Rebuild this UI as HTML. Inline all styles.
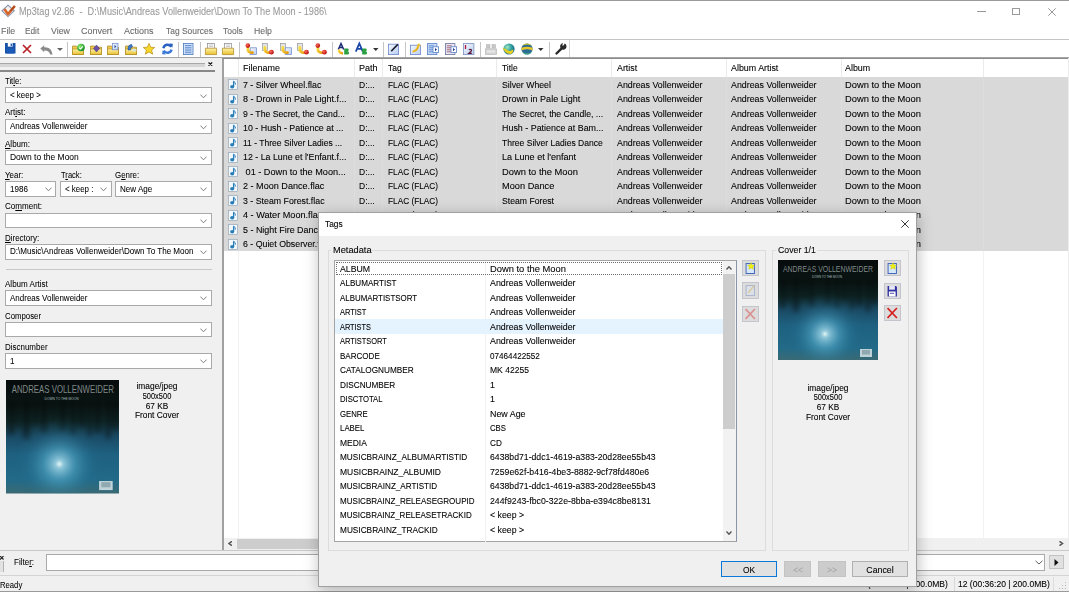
<!DOCTYPE html>
<html><head><meta charset="utf-8">
<style>
*{box-sizing:border-box;margin:0;padding:0}
html,body{width:1069px;height:592px;overflow:hidden;background:#f0f0f0}
body{position:relative;font-family:"Liberation Sans",sans-serif;font-size:9px;color:#000}
.a{position:absolute}
.t{position:absolute;white-space:pre;line-height:10px;-webkit-text-stroke:0.1px currentColor}
.cb{position:absolute;background:#fff;border:1px solid #a9a9a9}
.cb .v{position:absolute;left:3px;top:2px;white-space:pre;line-height:10px}
.chev{position:absolute;right:3.5px;top:5.2px;width:7px;height:4.5px}
.ic{position:absolute;width:12px;height:12px}
</style></head><body>

<div class="a" style="left:0px;top:0px;width:1069px;height:1px;background:#9a9a9a;"></div>
<div class="a" style="left:0px;top:1px;width:1069px;height:38px;background:#fff;"></div>
<div class="a" style="left:0px;top:38.5px;width:1069px;height:1px;background:#c4c4c4;"></div>
<div class="a" style="left:0px;top:39.5px;width:1069px;height:18px;background:#fff;"></div>
<div class="a" style="left:0px;top:57px;width:1069px;height:1px;background:#a5a5a5;"></div>
<svg class="a" style="left:1px;top:4px;width:15px;height:14px" viewBox="0 0 15 14">
<path d="M7 1.2 L13.2 6.8 L7 12.6 L1 6.8z" fill="#f4f0ea" stroke="#6a7e9e" stroke-width="1.1" opacity="0.85"/>
<path d="M3.4 5 L7 10.2 L13.8 2" fill="none" stroke="#d8662a" stroke-width="2.6" stroke-linejoin="round"/>
<path d="M9.5 7 L13.8 2" fill="none" stroke="#a8481e" stroke-width="1.6"/>
</svg>
<div class="t" style="left:18.70px;top:6.49px;font-size:10.4px;line-height:11.62px;color:#9b9b9b;transform:scaleX(0.880);transform-origin:0 0;">Mp3tag v2.86  -  D:\Music\Andreas Vollenweider\Down To The Moon - 1986\</div>
<div class="a" style="left:976.8px;top:11.2px;width:9.2px;height:1px;background:#9a9a9a;"></div>
<div class="a" style="left:1012px;top:7.7px;width:8px;height:7.8px;background:transparent;border:1px solid #9a9a9a"></div>
<svg class="a" style="left:1047.5px;top:7.5px;width:8px;height:8px" viewBox="0 0 8 8"><path d="M0.3 0.3 L7.7 7.7 M7.7 0.3 L0.3 7.7" stroke="#8c8c8c" stroke-width="0.9"/></svg>
<div class="t" style="left:0.90px;top:25.37px;font-size:9.87px;line-height:11.02px;color:#6a6a6a;transform:scaleX(0.893);transform-origin:0 0;">File</div>
<div class="t" style="left:25.40px;top:25.37px;font-size:9.87px;line-height:11.02px;color:#6a6a6a;transform:scaleX(0.838);transform-origin:0 0;">Edit</div>
<div class="t" style="left:51.00px;top:25.37px;font-size:9.87px;line-height:11.02px;color:#6a6a6a;transform:scaleX(0.889);transform-origin:0 0;">View</div>
<div class="t" style="left:80.80px;top:25.37px;font-size:9.87px;line-height:11.02px;color:#6a6a6a;transform:scaleX(0.907);transform-origin:0 0;">Convert</div>
<div class="t" style="left:123.80px;top:25.37px;font-size:9.87px;line-height:11.02px;color:#6a6a6a;transform:scaleX(0.913);transform-origin:0 0;">Actions</div>
<div class="t" style="left:165.50px;top:25.37px;font-size:9.87px;line-height:11.02px;color:#6a6a6a;transform:scaleX(0.856);transform-origin:0 0;">Tag Sources</div>
<div class="t" style="left:223.30px;top:25.37px;font-size:9.87px;line-height:11.02px;color:#6a6a6a;transform:scaleX(0.862);transform-origin:0 0;">Tools</div>
<div class="t" style="left:254.40px;top:25.37px;font-size:9.87px;line-height:11.02px;color:#6a6a6a;transform:scaleX(0.883);transform-origin:0 0;">Help</div>
<svg width="0" height="0" style="position:absolute"><defs><linearGradient id="fold" x1="0" y1="0" x2="0" y2="1"><stop offset="0" stop-color="#fff3a8"/><stop offset="1" stop-color="#e8c030"/></linearGradient><linearGradient id="hook" x1="0" y1="0" x2="1" y2="1"><stop offset="0" stop-color="#f8e040"/><stop offset="1" stop-color="#e89a10"/></linearGradient><radialGradient id="ball" cx="0.35" cy="0.35" r="0.7"><stop offset="0" stop-color="#ff6a5a"/><stop offset="1" stop-color="#b00808"/></radialGradient><radialGradient id="gball" cx="0.35" cy="0.35" r="0.7"><stop offset="0" stop-color="#90f070"/><stop offset="1" stop-color="#108a20"/></radialGradient><linearGradient id="docb" x1="0" y1="0" x2="1" y2="1"><stop offset="0" stop-color="#f4f8ff"/><stop offset="1" stop-color="#b8cef0"/></linearGradient><radialGradient id="globe1" cx="0.35" cy="0.35" r="0.75"><stop offset="0" stop-color="#a0e8c0"/><stop offset="0.5" stop-color="#30a0a0"/><stop offset="1" stop-color="#1a5a80"/></radialGradient></defs></svg>
<svg class="a" style="left:4.8px;top:43.2px;width:10.5px;height:10.5px;overflow:visible" viewBox="0 0 10.5 10.5"><path d="M0 0 h10.5 v10.5 h-10.5z" fill="#1552a8"/><rect x="2.8" y="0" width="4.8" height="3.6" fill="#fff"/><rect x="5.6" y="0.6" width="1.3" height="2.4" fill="#1552a8"/><rect x="1.5" y="5.5" width="7.5" height="5" fill="#1a5cb8"/></svg>
<svg class="a" style="left:22px;top:44.2px;width:10px;height:10px;overflow:visible" viewBox="0 0 10 10"><path d="M1 1 L9 9 M9 1 L1 9" stroke="#b82024" stroke-width="1.7"/></svg>
<svg class="a" style="left:39.5px;top:44.5px;width:13px;height:10px;overflow:visible" viewBox="0 0 13 10"><path d="M0.3 3.6 L4.2 0.3 L4.2 2.2 Q11.5 1.8 12.6 9.6 L10.2 9.6 Q9 5.2 4.2 5.5 L4.2 7.2z" fill="#8a8a8a"/></svg>
<svg class="a" style="left:57px;top:47.5px;width:6px;height:3px;overflow:visible" viewBox="0 0 6 3"><path d="M0 0 h6 l-3 3z" fill="#666"/></svg>
<div class="a" style="left:67px;top:42px;width:1px;height:14.5px;background:#c4c4c4;"></div>
<svg class="a" style="left:72px;top:42.5px;width:13px;height:12px;overflow:visible" viewBox="0 0 13 12"><path d="M0.5 3 h4 l1 1.2 h6 v7.3 h-11z" fill="#f0c850" stroke="#a88420" stroke-width="0.7"/><path d="M0.5 6 h11 v5.5 h-11z" fill="url(#fold)" stroke="#a88420" stroke-width="0.6"/><circle cx="9" cy="4.5" r="3.8" fill="url(#gball)"/><path d="M7.1 4.6 l1.4 1.4 l2.3-2.6" stroke="#fff" fill="none" stroke-width="1.1"/></svg>
<svg class="a" style="left:90px;top:42.5px;width:12px;height:12px;overflow:visible" viewBox="0 0 12 12"><path d="M0.5 3 h4 l1 1.2 h6 v7.3 h-11z" fill="#f0c850" stroke="#a88420" stroke-width="0.7"/><path d="M0.5 6 h11 v5.5 h-11z" fill="url(#fold)" stroke="#a88420" stroke-width="0.6"/><path d="M3.5 5.5 l3-3.5 l3 3.5 l-3 3.5z" fill="#6a50a8" stroke="#403070" stroke-width="0.5"/></svg>
<svg class="a" style="left:107px;top:42.5px;width:12px;height:12px;overflow:visible" viewBox="0 0 12 12"><path d="M0.5 3 h4 l1 1.2 h6 v7.3 h-11z" fill="#f0c850" stroke="#a88420" stroke-width="0.7"/><path d="M0.5 6 h11 v5.5 h-11z" fill="url(#fold)" stroke="#a88420" stroke-width="0.6"/><rect x="5.5" y="0.3" width="5.5" height="6.5" fill="url(#docb)" stroke="#6a86c8" stroke-width="0.7"/><path d="M7.5 2 v3.2 l1.7-1.6z" fill="#1e3a90"/></svg>
<svg class="a" style="left:125px;top:42.5px;width:12px;height:12px;overflow:visible" viewBox="0 0 12 12"><path d="M0.5 3 h4 l1 1.2 h6 v7.3 h-11z" fill="#f0c850" stroke="#a88420" stroke-width="0.7"/><path d="M0.5 6 h11 v5.5 h-11z" fill="url(#fold)" stroke="#a88420" stroke-width="0.6"/><path d="M3 7 Q2.5 2 6.5 1.2 L7.5 3.8 Q5 4.5 5.5 7z" fill="#3a78c8" stroke="#1a4a90" stroke-width="0.5"/><ellipse cx="9" cy="7" rx="2.6" ry="1.6" fill="#d8e8d0"/></svg>
<svg class="a" style="left:143px;top:42.8px;width:12px;height:12px;overflow:visible" viewBox="0 0 12 12"><path d="M6 0.4 L7.7 4.2 L11.7 4.5 L8.6 7.1 L9.7 11.2 L6 9 L2.3 11.2 L3.4 7.1 L0.3 4.5 L4.3 4.2z" fill="#f8d828" stroke="#b88a10" stroke-width="0.7"/></svg>
<svg class="a" style="left:161.5px;top:42.8px;width:11px;height:12px;overflow:visible" viewBox="0 0 11 12"><path d="M9.3 3.8 A4.3 4.3 0 0 0 1.4 5.2" fill="none" stroke="#2a60c0" stroke-width="2.4"/><path d="M1.7 7.6 A4.3 4.3 0 0 0 9.6 6.6" fill="none" stroke="#3a78d8" stroke-width="2.4"/><path d="M7.2 0.6 l3.6 0.2 l-0.4 4z" fill="#2a60c0"/><path d="M3.8 11.4 l-3.6 -0.2 l0.4-4z" fill="#3a78d8"/></svg>
<div class="a" style="left:177.7px;top:42px;width:1px;height:14.5px;background:#c4c4c4;"></div>
<svg class="a" style="left:183px;top:42.5px;width:10.5px;height:12px;overflow:visible" viewBox="0 0 10.5 12"><rect x="0.4" y="0.4" width="9.6" height="11.2" fill="#d4e4f8" stroke="#4a78c0" stroke-width="0.8"/><path d="M2 2.5 h6.5 M2 4.3 h6.5 M2 6.1 h6.5 M2 7.9 h6.5 M2 9.7 h6.5" stroke="#5a88d0" stroke-width="0.9"/></svg>
<div class="a" style="left:199.7px;top:42px;width:1px;height:14.5px;background:#c4c4c4;"></div>
<svg class="a" style="left:204.5px;top:42.5px;width:12px;height:12px;overflow:visible" viewBox="0 0 12 12"><rect x="2.5" y="0.4" width="7" height="6.5" fill="#fafafa" stroke="#8a8a8a" stroke-width="0.7"/><path d="M4 2 h4 M4 3.5 h4" stroke="#b0b0b0" stroke-width="0.6"/><path d="M0.4 5.2 h11.2 v6.4 h-11.2z" fill="url(#fold)" stroke="#a88420" stroke-width="0.7"/></svg>
<svg class="a" style="left:222px;top:42.5px;width:12px;height:12px;overflow:visible" viewBox="0 0 12 12"><rect x="2.5" y="0.4" width="7" height="6.5" fill="#fafafa" stroke="#8a8a8a" stroke-width="0.7"/><path d="M4 2 h4 M4 3.5 h4" stroke="#b0b0b0" stroke-width="0.6"/><path d="M0.4 5.2 h11.2 v6.4 h-11.2z" fill="url(#fold)" stroke="#a88420" stroke-width="0.7"/></svg>
<div class="a" style="left:239px;top:42px;width:1px;height:14.5px;background:#c4c4c4;"></div>
<svg class="a" style="left:245px;top:42.5px;width:12px;height:12px;overflow:visible" viewBox="0 0 12 12"><rect x="5.2" y="4.8" width="6.3" height="6.8" fill="url(#docb)" stroke="#6a86c8" stroke-width="0.7"/><path d="M2.8 4.5 Q2.4 10.2 7.5 9.6" fill="none" stroke="url(#hook)" stroke-width="2.8" stroke-linecap="round"/><circle cx="2.8" cy="2.6" r="2.3" fill="url(#ball)"/></svg>
<svg class="a" style="left:262px;top:42.5px;width:12px;height:12px;overflow:visible" viewBox="0 0 12 12"><rect x="0.5" y="0.4" width="5" height="7" fill="#e4e4e4" stroke="#8a8a8a" stroke-width="0.6"/><path d="M2.8 4.5 Q2.4 10.2 7.5 9.6" fill="none" stroke="url(#hook)" stroke-width="2.8" stroke-linecap="round"/><circle cx="9.4" cy="9.2" r="2.4" fill="url(#ball)"/></svg>
<svg class="a" style="left:279.5px;top:42.5px;width:12px;height:12px;overflow:visible" viewBox="0 0 12 12"><rect x="0.5" y="0.4" width="5" height="7" fill="#e4e4e4" stroke="#8a8a8a" stroke-width="0.6"/><rect x="5.2" y="4.8" width="6.3" height="6.8" fill="url(#docb)" stroke="#6a86c8" stroke-width="0.7"/><path d="M2.8 4.5 Q2.4 10.2 7.5 9.6" fill="none" stroke="url(#hook)" stroke-width="2.8" stroke-linecap="round"/></svg>
<svg class="a" style="left:297px;top:42.5px;width:12px;height:12px;overflow:visible" viewBox="0 0 12 12"><rect x="0.5" y="0.4" width="5" height="7" fill="#e4e4e4" stroke="#8a8a8a" stroke-width="0.6"/><path d="M2.8 4.5 Q2.4 10.2 7.5 9.6" fill="none" stroke="url(#hook)" stroke-width="2.8" stroke-linecap="round"/><circle cx="9.4" cy="9.2" r="2.4" fill="url(#ball)"/></svg>
<svg class="a" style="left:314.5px;top:42.5px;width:12px;height:12px;overflow:visible" viewBox="0 0 12 12"><path d="M2.8 4.5 Q2.4 10.2 7.5 9.6" fill="none" stroke="url(#hook)" stroke-width="2.8" stroke-linecap="round"/><circle cx="2.8" cy="2.6" r="2.3" fill="url(#ball)"/><circle cx="9.4" cy="9.2" r="2.4" fill="url(#ball)"/></svg>
<div class="a" style="left:331.7px;top:42px;width:1px;height:14.5px;background:#c4c4c4;"></div>
<svg class="a" style="left:336.5px;top:42.5px;width:12.5px;height:12px;overflow:visible" viewBox="0 0 12.5 12"><path d="M1.3 6.5 L4 0.5 L6.7 6.5 M2.3 4.4 h3.4" fill="none" stroke="#1a2a70" stroke-width="1.5"/><path d="M2 6.5 Q1.8 10.5 6 10.2" fill="none" stroke="url(#hook)" stroke-width="2.4"/><path d="M7.2 5.4 h3 q1.6 0 1.6 1.4 q0 1.3 -1.3 1.4 q1.6 0.2 1.6 1.7 q0 1.7 -1.8 1.7 h-3.1z" fill="#2aa040"/></svg>
<svg class="a" style="left:354.6px;top:42.5px;width:12.5px;height:12px;overflow:visible" viewBox="0 0 12.5 12"><path d="M0.8 8.6 L4.3 0.5 L7.8 8.6 M2.1 5.8 h4.4" fill="none" stroke="#1a48a8" stroke-width="1.8"/><path d="M7.2 5.4 h3 q1.6 0 1.6 1.4 q0 1.3 -1.3 1.4 q1.6 0.2 1.6 1.7 q0 1.7 -1.8 1.7 h-3.1z" fill="#2aa040"/></svg>
<svg class="a" style="left:373.3px;top:47.5px;width:5.5px;height:3px;overflow:visible" viewBox="0 0 5.5 3"><path d="M0 0 h5.5 l-2.75 3z" fill="#333"/></svg>
<div class="a" style="left:382.6px;top:42px;width:1px;height:14.5px;background:#c4c4c4;"></div>
<svg class="a" style="left:387.5px;top:42.5px;width:11.5px;height:12px;overflow:visible" viewBox="0 0 11.5 12"><rect x="0.4" y="1.2" width="10" height="10.4" fill="url(#docb)" stroke="#6a86c8" stroke-width="0.8"/><path d="M3.2 8.2 L9.8 1.4" stroke="#1a1a30" stroke-width="1.6"/></svg>
<div class="a" style="left:405.3px;top:42px;width:1px;height:14.5px;background:#c4c4c4;"></div>
<svg class="a" style="left:409.5px;top:42.5px;width:12px;height:12px;overflow:visible" viewBox="0 0 12 12"><rect x="0.4" y="2.2" width="10" height="9.4" fill="url(#docb)" stroke="#6a86c8" stroke-width="0.8"/><path d="M2.5 8.5 Q6.5 8.5 8.3 3" fill="none" stroke="url(#hook)" stroke-width="2.2"/><path d="M6.5 2.5 l2.5-2.3 l1.8 3z" fill="#e8c020"/></svg>
<svg class="a" style="left:427px;top:42.5px;width:12px;height:12px;overflow:visible" viewBox="0 0 12 12"><rect x="0.4" y="0.6" width="9.5" height="11" fill="#c4daf6" stroke="#5a80c8" stroke-width="0.8"/><path d="M1.8 2.8 h5 M1.8 4.8 h5 M1.8 6.8 h5 M1.8 8.8 h5" stroke="#5a88d0" stroke-width="0.9"/><rect x="6" y="3.8" width="5.6" height="5.6" fill="#fff" stroke="#5a80c8" stroke-width="0.8"/><path d="M8 5 v3.2 l2-1.6z" fill="#1a3a90"/></svg>
<svg class="a" style="left:445px;top:42.5px;width:12px;height:12px;overflow:visible" viewBox="0 0 12 12"><rect x="0.4" y="0.6" width="9.5" height="11" fill="#e6e8f2" stroke="#6a70a0" stroke-width="0.8"/><path d="M1.8 2.8 h5 M1.8 4.8 h5 M1.8 6.8 h5 M1.8 8.8 h5" stroke="#a05a70" stroke-width="0.9"/><rect x="6" y="3.8" width="5.6" height="5.6" fill="#fff" stroke="#5a80c8" stroke-width="0.8"/><path d="M8 5 v3.2 l2-1.6z" fill="#1a3a90"/></svg>
<svg class="a" style="left:463px;top:42.5px;width:11.5px;height:12px;overflow:visible" viewBox="0 0 11.5 12"><rect x="0.4" y="0.6" width="10.5" height="11" fill="url(#docb)" stroke="#7a90c0" stroke-width="0.8"/><path d="M2.5 2 v4" stroke="#b01838" stroke-width="1.3"/><path d="M5.8 6.8 q1.5-1 2.6 0 q0.6 1 -0.8 2 l-1.8 1.5 h3" fill="none" stroke="#601838" stroke-width="1.2"/></svg>
<div class="a" style="left:479.7px;top:42px;width:1px;height:14.5px;background:#c4c4c4;"></div>
<svg class="a" style="left:484.5px;top:42.5px;width:12px;height:12px;overflow:visible" viewBox="0 0 12 12"><rect x="1.5" y="1.5" width="3.5" height="3.5" fill="#c8c8c8" stroke="#b0b0b0" stroke-width="0.5"/><rect x="7" y="1.5" width="3.5" height="3.5" fill="#c8c8c8" stroke="#b0b0b0" stroke-width="0.5"/><rect x="0.4" y="5.8" width="11.2" height="5.6" fill="#d4d4d4" stroke="#b0b0b0" stroke-width="0.6"/><rect x="2" y="7.5" width="8" height="2" fill="#e8e8e8"/></svg>
<svg class="a" style="left:502.6px;top:42.5px;width:12px;height:12px;overflow:visible" viewBox="0 0 12 12"><circle cx="6" cy="6" r="5.6" fill="url(#globe1)"/><path d="M0.8 6.5 Q3 11.5 8.5 10.8 Q11 9 10 6.5 Q6.5 9.5 3.2 6.2z" fill="#e8d020"/><path d="M0.5 5 Q2 8 4 7" fill="none" stroke="#e0c820" stroke-width="1.4"/></svg>
<svg class="a" style="left:520.6px;top:42.5px;width:12px;height:12px;overflow:visible" viewBox="0 0 12 12"><circle cx="6" cy="6" r="5.6" fill="#2a6a98"/><path d="M0.5 4.8 Q6 2.8 11.5 4.8 v2.6 Q6 5.2 0.5 7.4z" fill="#e8c828"/><path d="M1.5 2.8 Q6 0.6 10.5 2.8 L9 1.2 Q6 0 3 1.2z" fill="#c8c030"/><path d="M1 8.5 Q6 11.5 11 8.5 Q9 11.6 6 11.6 Q3 11.6 1 8.5z" fill="#3aa080"/></svg>
<svg class="a" style="left:538px;top:47.5px;width:5.5px;height:3px;overflow:visible" viewBox="0 0 5.5 3"><path d="M0 0 h5.5 l-2.75 3z" fill="#333"/></svg>
<div class="a" style="left:548.7px;top:42px;width:1px;height:14.5px;background:#c4c4c4;"></div>
<svg class="a" style="left:554.5px;top:42.5px;width:11px;height:12px;overflow:visible" viewBox="0 0 11 12"><path d="M1.5 10.5 L6.2 5.8" stroke="#2a2a2a" stroke-width="2.4" stroke-linecap="round"/><path d="M5.2 4.2 A3.2 3.2 0 1 0 9.8 0.6 L8.3 2.8 L7.1 2.2 L8.2 0.2 A3.2 3.2 0 0 0 5.2 4.2z" fill="#2a2a2a"/></svg>
<div class="a" style="left:569px;top:40px;width:1px;height:17px;background:#d8d8d8;"></div>
<div class="a" style="left:0px;top:63px;width:204.5px;height:1px;background:#a8a8a8;"></div>
<div class="a" style="left:0px;top:64px;width:204.5px;height:3px;background:#d6d6d6;"></div>
<svg class="a" style="left:208.3px;top:62.0px;width:4.7px;height:4.2px" viewBox="0 0 5 4.5"><path d="M0.5 0.5 L4.5 4 M4.5 0.5 L0.5 4" stroke="#111" stroke-width="1.3"/></svg>
<div class="a" style="left:0px;top:70.3px;width:214.6px;height:1.3px;background:#888888;"></div>
<div class="t" style="left:5.00px;top:76.81px;font-size:8.5px;line-height:9.49px;color:#000;transform:scaleX(0.905);transform-origin:0 0;-webkit-text-stroke:0.05px currentColor">Tit<u>l</u>e:</div>
<div class="cb" style="left:4.8px;top:87.4px;width:207px;height:15.6px"><svg class="chev" viewBox="0 0 7 4.5"><path d="M0.4 0.6 L3.5 3.8 L6.6 0.6" fill="none" stroke="#707070" stroke-width="0.9"/></svg><div class="a" style="left:0;top:0;width:190.5px;height:13.6px;overflow:hidden"><div class="t" style="left:4.40px;top:2.41px;font-size:8.5px;line-height:9.49px;color:#000;transform:scaleX(0.931);transform-origin:0 0;-webkit-text-stroke:0.05px currentColor">&lt; keep &gt;</div></div></div>
<div class="t" style="left:5.00px;top:108.31px;font-size:8.5px;line-height:9.49px;color:#000;transform:scaleX(0.940);transform-origin:0 0;-webkit-text-stroke:0.05px currentColor">Art<u>i</u>st:</div>
<div class="cb" style="left:4.8px;top:118.5px;width:207px;height:15.6px"><svg class="chev" viewBox="0 0 7 4.5"><path d="M0.4 0.6 L3.5 3.8 L6.6 0.6" fill="none" stroke="#707070" stroke-width="0.9"/></svg><div class="a" style="left:0;top:0;width:190.5px;height:13.6px;overflow:hidden"><div class="t" style="left:4.40px;top:2.41px;font-size:8.5px;line-height:9.49px;color:#000;transform:scaleX(0.942);transform-origin:0 0;-webkit-text-stroke:0.05px currentColor">Andreas Vollenweider</div></div></div>
<div class="t" style="left:5.00px;top:139.81px;font-size:8.5px;line-height:9.49px;color:#000;transform:scaleX(0.944);transform-origin:0 0;-webkit-text-stroke:0.05px currentColor"><u>A</u>lbum:</div>
<div class="cb" style="left:4.8px;top:149.8px;width:207px;height:15.6px"><svg class="chev" viewBox="0 0 7 4.5"><path d="M0.4 0.6 L3.5 3.8 L6.6 0.6" fill="none" stroke="#707070" stroke-width="0.9"/></svg><div class="a" style="left:0;top:0;width:190.5px;height:13.6px;overflow:hidden"><div class="t" style="left:4.40px;top:2.41px;font-size:8.5px;line-height:9.49px;color:#000;transform:scaleX(0.997);transform-origin:0 0;-webkit-text-stroke:0.05px currentColor">Down to the Moon</div></div></div>
<div class="t" style="left:5.00px;top:170.81px;font-size:8.5px;line-height:9.49px;color:#000;transform:scaleX(0.934);transform-origin:0 0;-webkit-text-stroke:0.05px currentColor"><u>Y</u>ear:</div>
<div class="cb" style="left:4.8px;top:181.2px;width:51.6px;height:15.6px"><svg class="chev" viewBox="0 0 7 4.5"><path d="M0.4 0.6 L3.5 3.8 L6.6 0.6" fill="none" stroke="#707070" stroke-width="0.9"/></svg><div class="a" style="left:0;top:0;width:35.1px;height:13.6px;overflow:hidden"><div class="t" style="left:4.40px;top:2.41px;font-size:8.5px;line-height:9.49px;color:#000;transform:scaleX(0.947);transform-origin:0 0;-webkit-text-stroke:0.05px currentColor">1986</div></div></div>
<div class="t" style="left:60.60px;top:170.81px;font-size:8.5px;line-height:9.49px;color:#000;transform:scaleX(0.890);transform-origin:0 0;-webkit-text-stroke:0.05px currentColor">T<u>r</u>ack:</div>
<div class="cb" style="left:60.0px;top:181.2px;width:51.8px;height:15.6px"><svg class="chev" viewBox="0 0 7 4.5"><path d="M0.4 0.6 L3.5 3.8 L6.6 0.6" fill="none" stroke="#707070" stroke-width="0.9"/></svg><div class="a" style="left:0;top:0;width:35.3px;height:13.6px;overflow:hidden"><div class="t" style="left:4.40px;top:2.41px;font-size:8.5px;line-height:9.49px;color:#000;transform:scaleX(0.932);transform-origin:0 0;-webkit-text-stroke:0.05px currentColor">&lt; keep :</div></div></div>
<div class="t" style="left:115.20px;top:170.81px;font-size:8.5px;line-height:9.49px;color:#000;transform:scaleX(0.929);transform-origin:0 0;-webkit-text-stroke:0.05px currentColor">G<u>e</u>nre:</div>
<div class="cb" style="left:115.0px;top:181.2px;width:96.8px;height:15.6px"><svg class="chev" viewBox="0 0 7 4.5"><path d="M0.4 0.6 L3.5 3.8 L6.6 0.6" fill="none" stroke="#707070" stroke-width="0.9"/></svg><div class="a" style="left:0;top:0;width:80.3px;height:13.6px;overflow:hidden"><div class="t" style="left:4.40px;top:2.41px;font-size:8.5px;line-height:9.49px;color:#000;transform:scaleX(0.946);transform-origin:0 0;-webkit-text-stroke:0.05px currentColor">New Age</div></div></div>
<div class="t" style="left:5.00px;top:202.31px;font-size:8.5px;line-height:9.49px;color:#000;transform:scaleX(0.946);transform-origin:0 0;-webkit-text-stroke:0.05px currentColor">Co<u>m</u>ment:</div>
<div class="cb" style="left:4.8px;top:212.5px;width:207px;height:15.6px"><svg class="chev" viewBox="0 0 7 4.5"><path d="M0.4 0.6 L3.5 3.8 L6.6 0.6" fill="none" stroke="#707070" stroke-width="0.9"/></svg><div class="a" style="left:0;top:0;width:190.5px;height:13.6px;overflow:hidden"></div></div>
<div class="t" style="left:5.00px;top:233.81px;font-size:8.5px;line-height:9.49px;color:#000;transform:scaleX(0.938);transform-origin:0 0;-webkit-text-stroke:0.05px currentColor"><u>D</u>irectory:</div>
<div class="cb" style="left:4.8px;top:244px;width:207px;height:15.6px"><svg class="chev" viewBox="0 0 7 4.5"><path d="M0.4 0.6 L3.5 3.8 L6.6 0.6" fill="none" stroke="#707070" stroke-width="0.9"/></svg><div class="a" style="left:0;top:0;width:190.5px;height:13.6px;overflow:hidden"><div class="t" style="left:4.40px;top:2.41px;font-size:8.5px;line-height:9.49px;color:#000;transform:scaleX(0.949);transform-origin:0 0;-webkit-text-stroke:0.05px currentColor">D:\Music\Andreas Vollenweider\Down To The Moon - 1986\</div></div></div>
<div class="a" style="left:6px;top:268.5px;width:206px;height:1px;background:#c8c8c8;"></div>
<div class="t" style="left:5.00px;top:279.81px;font-size:8.5px;line-height:9.49px;color:#000;transform:scaleX(0.945);transform-origin:0 0;-webkit-text-stroke:0.05px currentColor">Album Artist</div>
<div class="cb" style="left:4.8px;top:290.2px;width:207px;height:15.6px"><svg class="chev" viewBox="0 0 7 4.5"><path d="M0.4 0.6 L3.5 3.8 L6.6 0.6" fill="none" stroke="#707070" stroke-width="0.9"/></svg><div class="a" style="left:0;top:0;width:190.5px;height:13.6px;overflow:hidden"><div class="t" style="left:4.40px;top:2.41px;font-size:8.5px;line-height:9.49px;color:#000;transform:scaleX(0.942);transform-origin:0 0;-webkit-text-stroke:0.05px currentColor">Andreas Vollenweider</div></div></div>
<div class="t" style="left:5.00px;top:311.51px;font-size:8.5px;line-height:9.49px;color:#000;transform:scaleX(0.920);transform-origin:0 0;-webkit-text-stroke:0.05px currentColor">Composer</div>
<div class="cb" style="left:4.8px;top:321.8px;width:207px;height:15.6px"><svg class="chev" viewBox="0 0 7 4.5"><path d="M0.4 0.6 L3.5 3.8 L6.6 0.6" fill="none" stroke="#707070" stroke-width="0.9"/></svg><div class="a" style="left:0;top:0;width:190.5px;height:13.6px;overflow:hidden"></div></div>
<div class="t" style="left:5.00px;top:343.01px;font-size:8.5px;line-height:9.49px;color:#000;transform:scaleX(0.938);transform-origin:0 0;-webkit-text-stroke:0.05px currentColor">Discnumber</div>
<div class="cb" style="left:4.8px;top:353.2px;width:207px;height:15.6px"><svg class="chev" viewBox="0 0 7 4.5"><path d="M0.4 0.6 L3.5 3.8 L6.6 0.6" fill="none" stroke="#707070" stroke-width="0.9"/></svg><div class="a" style="left:0;top:0;width:190.5px;height:13.6px;overflow:hidden"><div class="t" style="left:4.40px;top:2.41px;font-size:8.5px;line-height:9.49px;color:#000;transform:scaleX(0.943);transform-origin:0 0;-webkit-text-stroke:0.05px currentColor">1</div></div></div>
<svg class="a" style="left:5.5px;top:380px;width:113.5px;height:113.5px" viewBox="0 0 100 100" preserveAspectRatio="none">
<defs>
<linearGradient id="lga" x1="0" y1="0" x2="0" y2="1">
<stop offset="0" stop-color="#060b0b"/><stop offset="0.22" stop-color="#0a1614"/><stop offset="0.36" stop-color="#102828"/><stop offset="0.5" stop-color="#1a4a64"/><stop offset="0.65" stop-color="#1e6080"/><stop offset="0.88" stop-color="#226a88"/><stop offset="1" stop-color="#3a6a74"/>
</linearGradient>
<radialGradient id="rga" cx="0.47" cy="0.74" r="0.42">
<stop offset="0" stop-color="#f0fff8" stop-opacity="0.95"/><stop offset="0.09" stop-color="#b0e4f4" stop-opacity="0.75"/><stop offset="0.35" stop-color="#58b0d0" stop-opacity="0.5"/><stop offset="0.7" stop-color="#2a7898" stop-opacity="0.18"/><stop offset="1" stop-color="#1a5a70" stop-opacity="0"/>
</radialGradient>
<filter id="bla"><feGaussianBlur stdDeviation="2.5"/></filter>
</defs>
<rect width="100" height="100" fill="url(#lga)"/>
<g filter="url(#bla)"><rect x="2" y="18" width="5" height="30" fill="#040808" opacity="0.4"/><rect x="9" y="18" width="3" height="24" fill="#040808" opacity="0.35"/><rect x="15" y="18" width="6" height="34" fill="#040808" opacity="0.4"/><rect x="24" y="18" width="4" height="22" fill="#040808" opacity="0.35"/><rect x="31" y="18" width="5" height="28" fill="#040808" opacity="0.4"/><rect x="40" y="18" width="3" height="20" fill="#040808" opacity="0.3"/><rect x="47" y="18" width="6" height="26" fill="#040808" opacity="0.35"/><rect x="57" y="18" width="4" height="30" fill="#040808" opacity="0.4"/><rect x="64" y="18" width="5" height="24" fill="#040808" opacity="0.35"/><rect x="72" y="18" width="3" height="32" fill="#040808" opacity="0.4"/><rect x="78" y="18" width="6" height="28" fill="#040808" opacity="0.35"/><rect x="88" y="18" width="4" height="34" fill="#040808" opacity="0.4"/><rect x="94" y="18" width="5" height="26" fill="#040808" opacity="0.35"/></g>
<rect width="100" height="100" fill="url(#rga)"/>
<text x="50" y="11.5" text-anchor="middle" font-family="Liberation Sans" font-size="9.5" fill="#d0dcdc" fill-opacity="0.6" textLength="90" lengthAdjust="spacingAndGlyphs">ANDREAS VOLLENWEIDER</text>
<text x="49" y="17.5" text-anchor="middle" font-family="Liberation Sans" font-size="3" fill="#a8bcbc" textLength="30" lengthAdjust="spacingAndGlyphs">DOWN TO THE MOON</text>
<rect x="82" y="89" width="12" height="8" fill="#d8e4e8" opacity="0.85"/>
<rect x="84" y="90" width="8" height="4.5" fill="#90a8b0"/>
</svg>
<div class="t" style="left:57.00px;width:200px;text-align:center;top:382.04px;font-size:8.8px;line-height:9.83px;color:#000;transform:scaleX(0.953);transform-origin:50% 0;">image/jpeg</div>
<div class="t" style="left:57.00px;width:200px;text-align:center;top:391.84px;font-size:8.8px;line-height:9.83px;color:#000;transform:scaleX(0.848);transform-origin:50% 0;">500x500</div>
<div class="t" style="left:57.00px;width:200px;text-align:center;top:401.64px;font-size:8.8px;line-height:9.83px;color:#000;transform:scaleX(0.938);transform-origin:50% 0;">67 KB</div>
<div class="t" style="left:57.00px;width:200px;text-align:center;top:411.44px;font-size:8.8px;line-height:9.83px;color:#000;transform:scaleX(0.951);transform-origin:50% 0;">Front Cover</div>
<div class="a" style="left:222.3px;top:58px;width:1.5px;height:492px;background:#a0a0a0;"></div>
<div class="a" style="left:0px;top:549.5px;width:223.5px;height:1px;background:#a4a4a4;"></div>
<div class="a" style="left:223.8px;top:58px;width:843.8px;height:492px;background:#fff;"></div>
<div class="a" style="left:222.3px;top:57.8px;width:845.8px;height:1px;background:#8c8c8c;"></div>
<div class="a" style="left:1067.6px;top:58px;width:1px;height:492px;background:#ececec;"></div>
<div class="a" style="left:238.3px;top:59px;width:1px;height:18px;background:#ebebeb;"></div>
<div class="a" style="left:353.5px;top:59px;width:1px;height:18px;background:#ebebeb;"></div>
<div class="a" style="left:382px;top:59px;width:1px;height:18px;background:#ebebeb;"></div>
<div class="a" style="left:495.7px;top:59px;width:1px;height:18px;background:#ebebeb;"></div>
<div class="a" style="left:611.4px;top:59px;width:1px;height:18px;background:#ebebeb;"></div>
<div class="a" style="left:725.5px;top:59px;width:1px;height:18px;background:#ebebeb;"></div>
<div class="a" style="left:840.5px;top:59px;width:1px;height:18px;background:#ebebeb;"></div>
<div class="a" style="left:983px;top:59px;width:1px;height:18px;background:#ebebeb;"></div>
<div class="t" style="left:243.30px;top:61.67px;font-size:9.87px;line-height:11.02px;color:#000;transform:scaleX(0.909);transform-origin:0 0;">Filename</div>
<div class="t" style="left:358.50px;top:61.67px;font-size:9.87px;line-height:11.02px;color:#000;transform:scaleX(0.917);transform-origin:0 0;">Path</div>
<div class="t" style="left:387.60px;top:61.67px;font-size:9.87px;line-height:11.02px;color:#000;transform:scaleX(0.861);transform-origin:0 0;">Tag</div>
<div class="t" style="left:502.00px;top:61.67px;font-size:9.87px;line-height:11.02px;color:#000;transform:scaleX(0.859);transform-origin:0 0;">Title</div>
<div class="t" style="left:616.60px;top:61.67px;font-size:9.87px;line-height:11.02px;color:#000;transform:scaleX(0.897);transform-origin:0 0;">Artist</div>
<div class="t" style="left:731.00px;top:61.67px;font-size:9.87px;line-height:11.02px;color:#000;transform:scaleX(0.900);transform-origin:0 0;">Album Artist</div>
<div class="t" style="left:845.30px;top:61.67px;font-size:9.87px;line-height:11.02px;color:#000;transform:scaleX(0.900);transform-origin:0 0;">Album</div>
<div class="a" style="left:223.8px;top:77.0px;width:843.8px;height:14.5px;background:#d9d9d9;"></div>
<div class="a" style="left:353.5px;top:77.0px;width:1px;height:14.5px;background:#dddddd;"></div>
<div class="a" style="left:382px;top:77.0px;width:1px;height:14.5px;background:#dddddd;"></div>
<div class="a" style="left:495.7px;top:77.0px;width:1px;height:14.5px;background:#dddddd;"></div>
<div class="a" style="left:611.4px;top:77.0px;width:1px;height:14.5px;background:#dddddd;"></div>
<div class="a" style="left:725.5px;top:77.0px;width:1px;height:14.5px;background:#dddddd;"></div>
<div class="a" style="left:840.5px;top:77.0px;width:1px;height:14.5px;background:#dddddd;"></div>
<div class="a" style="left:983px;top:77.0px;width:1px;height:14.5px;background:#dddddd;"></div>
<svg class="a" style="left:228px;top:79.4px;width:10px;height:11px" viewBox="0 0 10 11"><rect x="0.5" y="0.5" width="9" height="10" fill="#f2f8fc" stroke="#98a8b8" stroke-width="0.7"/><path d="M5.6 2.2 v5.2" stroke="#2a7eb8" stroke-width="1.3"/><ellipse cx="4.2" cy="7.7" rx="2.1" ry="1.7" fill="#2a7eb8"/><path d="M5.6 2.2 Q7.9 3.4 7.3 5.6" fill="none" stroke="#2a7eb8" stroke-width="1"/></svg>
<div class="t" style="left:243.30px;top:78.77px;font-size:9.87px;line-height:11.02px;color:#000;transform:scaleX(0.894);transform-origin:0 0;">7 - Silver Wheel.flac</div>
<div class="t" style="left:358.50px;top:78.77px;font-size:9.87px;line-height:11.02px;color:#000;transform:scaleX(0.864);transform-origin:0 0;">D:...</div>
<div class="t" style="left:387.60px;top:78.77px;font-size:9.87px;line-height:11.02px;color:#000;transform:scaleX(0.837);transform-origin:0 0;">FLAC (FLAC)</div>
<div class="t" style="left:502.00px;top:78.77px;font-size:9.87px;line-height:11.02px;color:#000;transform:scaleX(0.883);transform-origin:0 0;">Silver Wheel</div>
<div class="t" style="left:616.60px;top:78.77px;font-size:9.87px;line-height:11.02px;color:#000;transform:scaleX(0.897);transform-origin:0 0;">Andreas Vollenweider</div>
<div class="t" style="left:731.00px;top:78.77px;font-size:9.87px;line-height:11.02px;color:#000;transform:scaleX(0.897);transform-origin:0 0;">Andreas Vollenweider</div>
<div class="t" style="left:845.30px;top:78.77px;font-size:9.87px;line-height:11.02px;color:#000;transform:scaleX(0.949);transform-origin:0 0;">Down to the Moon</div>
<div class="a" style="left:223.8px;top:91.5px;width:843.8px;height:14.5px;background:#d9d9d9;"></div>
<div class="a" style="left:353.5px;top:91.5px;width:1px;height:14.5px;background:#dddddd;"></div>
<div class="a" style="left:382px;top:91.5px;width:1px;height:14.5px;background:#dddddd;"></div>
<div class="a" style="left:495.7px;top:91.5px;width:1px;height:14.5px;background:#dddddd;"></div>
<div class="a" style="left:611.4px;top:91.5px;width:1px;height:14.5px;background:#dddddd;"></div>
<div class="a" style="left:725.5px;top:91.5px;width:1px;height:14.5px;background:#dddddd;"></div>
<div class="a" style="left:840.5px;top:91.5px;width:1px;height:14.5px;background:#dddddd;"></div>
<div class="a" style="left:983px;top:91.5px;width:1px;height:14.5px;background:#dddddd;"></div>
<svg class="a" style="left:228px;top:93.9px;width:10px;height:11px" viewBox="0 0 10 11"><rect x="0.5" y="0.5" width="9" height="10" fill="#f2f8fc" stroke="#98a8b8" stroke-width="0.7"/><path d="M5.6 2.2 v5.2" stroke="#2a7eb8" stroke-width="1.3"/><ellipse cx="4.2" cy="7.7" rx="2.1" ry="1.7" fill="#2a7eb8"/><path d="M5.6 2.2 Q7.9 3.4 7.3 5.6" fill="none" stroke="#2a7eb8" stroke-width="1"/></svg>
<div class="t" style="left:243.30px;top:93.27px;font-size:9.87px;line-height:11.02px;color:#000;transform:scaleX(0.912);transform-origin:0 0;">8 - Drown in Pale Light.f...</div>
<div class="t" style="left:358.50px;top:93.27px;font-size:9.87px;line-height:11.02px;color:#000;transform:scaleX(0.864);transform-origin:0 0;">D:...</div>
<div class="t" style="left:387.60px;top:93.27px;font-size:9.87px;line-height:11.02px;color:#000;transform:scaleX(0.837);transform-origin:0 0;">FLAC (FLAC)</div>
<div class="t" style="left:502.00px;top:93.27px;font-size:9.87px;line-height:11.02px;color:#000;transform:scaleX(0.915);transform-origin:0 0;">Drown in Pale Light</div>
<div class="t" style="left:616.60px;top:93.27px;font-size:9.87px;line-height:11.02px;color:#000;transform:scaleX(0.897);transform-origin:0 0;">Andreas Vollenweider</div>
<div class="t" style="left:731.00px;top:93.27px;font-size:9.87px;line-height:11.02px;color:#000;transform:scaleX(0.897);transform-origin:0 0;">Andreas Vollenweider</div>
<div class="t" style="left:845.30px;top:93.27px;font-size:9.87px;line-height:11.02px;color:#000;transform:scaleX(0.949);transform-origin:0 0;">Down to the Moon</div>
<div class="a" style="left:223.8px;top:106.0px;width:843.8px;height:14.5px;background:#d9d9d9;"></div>
<div class="a" style="left:353.5px;top:106.0px;width:1px;height:14.5px;background:#dddddd;"></div>
<div class="a" style="left:382px;top:106.0px;width:1px;height:14.5px;background:#dddddd;"></div>
<div class="a" style="left:495.7px;top:106.0px;width:1px;height:14.5px;background:#dddddd;"></div>
<div class="a" style="left:611.4px;top:106.0px;width:1px;height:14.5px;background:#dddddd;"></div>
<div class="a" style="left:725.5px;top:106.0px;width:1px;height:14.5px;background:#dddddd;"></div>
<div class="a" style="left:840.5px;top:106.0px;width:1px;height:14.5px;background:#dddddd;"></div>
<div class="a" style="left:983px;top:106.0px;width:1px;height:14.5px;background:#dddddd;"></div>
<svg class="a" style="left:228px;top:108.4px;width:10px;height:11px" viewBox="0 0 10 11"><rect x="0.5" y="0.5" width="9" height="10" fill="#f2f8fc" stroke="#98a8b8" stroke-width="0.7"/><path d="M5.6 2.2 v5.2" stroke="#2a7eb8" stroke-width="1.3"/><ellipse cx="4.2" cy="7.7" rx="2.1" ry="1.7" fill="#2a7eb8"/><path d="M5.6 2.2 Q7.9 3.4 7.3 5.6" fill="none" stroke="#2a7eb8" stroke-width="1"/></svg>
<div class="t" style="left:243.30px;top:107.77px;font-size:9.87px;line-height:11.02px;color:#000;transform:scaleX(0.879);transform-origin:0 0;">9 - The Secret, the Cand...</div>
<div class="t" style="left:358.50px;top:107.77px;font-size:9.87px;line-height:11.02px;color:#000;transform:scaleX(0.864);transform-origin:0 0;">D:...</div>
<div class="t" style="left:387.60px;top:107.77px;font-size:9.87px;line-height:11.02px;color:#000;transform:scaleX(0.837);transform-origin:0 0;">FLAC (FLAC)</div>
<div class="t" style="left:502.00px;top:107.77px;font-size:9.87px;line-height:11.02px;color:#000;transform:scaleX(0.878);transform-origin:0 0;">The Secret, the Candle, ...</div>
<div class="t" style="left:616.60px;top:107.77px;font-size:9.87px;line-height:11.02px;color:#000;transform:scaleX(0.897);transform-origin:0 0;">Andreas Vollenweider</div>
<div class="t" style="left:731.00px;top:107.77px;font-size:9.87px;line-height:11.02px;color:#000;transform:scaleX(0.897);transform-origin:0 0;">Andreas Vollenweider</div>
<div class="t" style="left:845.30px;top:107.77px;font-size:9.87px;line-height:11.02px;color:#000;transform:scaleX(0.949);transform-origin:0 0;">Down to the Moon</div>
<div class="a" style="left:223.8px;top:120.5px;width:843.8px;height:14.5px;background:#d9d9d9;"></div>
<div class="a" style="left:353.5px;top:120.5px;width:1px;height:14.5px;background:#dddddd;"></div>
<div class="a" style="left:382px;top:120.5px;width:1px;height:14.5px;background:#dddddd;"></div>
<div class="a" style="left:495.7px;top:120.5px;width:1px;height:14.5px;background:#dddddd;"></div>
<div class="a" style="left:611.4px;top:120.5px;width:1px;height:14.5px;background:#dddddd;"></div>
<div class="a" style="left:725.5px;top:120.5px;width:1px;height:14.5px;background:#dddddd;"></div>
<div class="a" style="left:840.5px;top:120.5px;width:1px;height:14.5px;background:#dddddd;"></div>
<div class="a" style="left:983px;top:120.5px;width:1px;height:14.5px;background:#dddddd;"></div>
<svg class="a" style="left:228px;top:122.9px;width:10px;height:11px" viewBox="0 0 10 11"><rect x="0.5" y="0.5" width="9" height="10" fill="#f2f8fc" stroke="#98a8b8" stroke-width="0.7"/><path d="M5.6 2.2 v5.2" stroke="#2a7eb8" stroke-width="1.3"/><ellipse cx="4.2" cy="7.7" rx="2.1" ry="1.7" fill="#2a7eb8"/><path d="M5.6 2.2 Q7.9 3.4 7.3 5.6" fill="none" stroke="#2a7eb8" stroke-width="1"/></svg>
<div class="t" style="left:243.30px;top:122.27px;font-size:9.87px;line-height:11.02px;color:#000;transform:scaleX(0.899);transform-origin:0 0;">10 - Hush - Patience at ...</div>
<div class="t" style="left:358.50px;top:122.27px;font-size:9.87px;line-height:11.02px;color:#000;transform:scaleX(0.864);transform-origin:0 0;">D:...</div>
<div class="t" style="left:387.60px;top:122.27px;font-size:9.87px;line-height:11.02px;color:#000;transform:scaleX(0.837);transform-origin:0 0;">FLAC (FLAC)</div>
<div class="t" style="left:502.00px;top:122.27px;font-size:9.87px;line-height:11.02px;color:#000;transform:scaleX(0.903);transform-origin:0 0;">Hush - Patience at Bam...</div>
<div class="t" style="left:616.60px;top:122.27px;font-size:9.87px;line-height:11.02px;color:#000;transform:scaleX(0.897);transform-origin:0 0;">Andreas Vollenweider</div>
<div class="t" style="left:731.00px;top:122.27px;font-size:9.87px;line-height:11.02px;color:#000;transform:scaleX(0.897);transform-origin:0 0;">Andreas Vollenweider</div>
<div class="t" style="left:845.30px;top:122.27px;font-size:9.87px;line-height:11.02px;color:#000;transform:scaleX(0.949);transform-origin:0 0;">Down to the Moon</div>
<div class="a" style="left:223.8px;top:135.0px;width:843.8px;height:14.5px;background:#d9d9d9;"></div>
<div class="a" style="left:353.5px;top:135.0px;width:1px;height:14.5px;background:#dddddd;"></div>
<div class="a" style="left:382px;top:135.0px;width:1px;height:14.5px;background:#dddddd;"></div>
<div class="a" style="left:495.7px;top:135.0px;width:1px;height:14.5px;background:#dddddd;"></div>
<div class="a" style="left:611.4px;top:135.0px;width:1px;height:14.5px;background:#dddddd;"></div>
<div class="a" style="left:725.5px;top:135.0px;width:1px;height:14.5px;background:#dddddd;"></div>
<div class="a" style="left:840.5px;top:135.0px;width:1px;height:14.5px;background:#dddddd;"></div>
<div class="a" style="left:983px;top:135.0px;width:1px;height:14.5px;background:#dddddd;"></div>
<svg class="a" style="left:228px;top:137.4px;width:10px;height:11px" viewBox="0 0 10 11"><rect x="0.5" y="0.5" width="9" height="10" fill="#f2f8fc" stroke="#98a8b8" stroke-width="0.7"/><path d="M5.6 2.2 v5.2" stroke="#2a7eb8" stroke-width="1.3"/><ellipse cx="4.2" cy="7.7" rx="2.1" ry="1.7" fill="#2a7eb8"/><path d="M5.6 2.2 Q7.9 3.4 7.3 5.6" fill="none" stroke="#2a7eb8" stroke-width="1"/></svg>
<div class="t" style="left:243.30px;top:136.77px;font-size:9.87px;line-height:11.02px;color:#000;transform:scaleX(0.865);transform-origin:0 0;">11 - Three Silver Ladies ...</div>
<div class="t" style="left:358.50px;top:136.77px;font-size:9.87px;line-height:11.02px;color:#000;transform:scaleX(0.864);transform-origin:0 0;">D:...</div>
<div class="t" style="left:387.60px;top:136.77px;font-size:9.87px;line-height:11.02px;color:#000;transform:scaleX(0.837);transform-origin:0 0;">FLAC (FLAC)</div>
<div class="t" style="left:502.00px;top:136.77px;font-size:9.87px;line-height:11.02px;color:#000;transform:scaleX(0.868);transform-origin:0 0;">Three Silver Ladies Dance</div>
<div class="t" style="left:616.60px;top:136.77px;font-size:9.87px;line-height:11.02px;color:#000;transform:scaleX(0.897);transform-origin:0 0;">Andreas Vollenweider</div>
<div class="t" style="left:731.00px;top:136.77px;font-size:9.87px;line-height:11.02px;color:#000;transform:scaleX(0.897);transform-origin:0 0;">Andreas Vollenweider</div>
<div class="t" style="left:845.30px;top:136.77px;font-size:9.87px;line-height:11.02px;color:#000;transform:scaleX(0.949);transform-origin:0 0;">Down to the Moon</div>
<div class="a" style="left:223.8px;top:149.5px;width:843.8px;height:14.5px;background:#d9d9d9;"></div>
<div class="a" style="left:353.5px;top:149.5px;width:1px;height:14.5px;background:#dddddd;"></div>
<div class="a" style="left:382px;top:149.5px;width:1px;height:14.5px;background:#dddddd;"></div>
<div class="a" style="left:495.7px;top:149.5px;width:1px;height:14.5px;background:#dddddd;"></div>
<div class="a" style="left:611.4px;top:149.5px;width:1px;height:14.5px;background:#dddddd;"></div>
<div class="a" style="left:725.5px;top:149.5px;width:1px;height:14.5px;background:#dddddd;"></div>
<div class="a" style="left:840.5px;top:149.5px;width:1px;height:14.5px;background:#dddddd;"></div>
<div class="a" style="left:983px;top:149.5px;width:1px;height:14.5px;background:#dddddd;"></div>
<svg class="a" style="left:228px;top:151.9px;width:10px;height:11px" viewBox="0 0 10 11"><rect x="0.5" y="0.5" width="9" height="10" fill="#f2f8fc" stroke="#98a8b8" stroke-width="0.7"/><path d="M5.6 2.2 v5.2" stroke="#2a7eb8" stroke-width="1.3"/><ellipse cx="4.2" cy="7.7" rx="2.1" ry="1.7" fill="#2a7eb8"/><path d="M5.6 2.2 Q7.9 3.4 7.3 5.6" fill="none" stroke="#2a7eb8" stroke-width="1"/></svg>
<div class="t" style="left:243.30px;top:151.27px;font-size:9.87px;line-height:11.02px;color:#000;transform:scaleX(0.896);transform-origin:0 0;">12 - La Lune et l&#39;Enfant.f...</div>
<div class="t" style="left:358.50px;top:151.27px;font-size:9.87px;line-height:11.02px;color:#000;transform:scaleX(0.864);transform-origin:0 0;">D:...</div>
<div class="t" style="left:387.60px;top:151.27px;font-size:9.87px;line-height:11.02px;color:#000;transform:scaleX(0.837);transform-origin:0 0;">FLAC (FLAC)</div>
<div class="t" style="left:502.00px;top:151.27px;font-size:9.87px;line-height:11.02px;color:#000;transform:scaleX(0.916);transform-origin:0 0;">La Lune et l&#39;enfant</div>
<div class="t" style="left:616.60px;top:151.27px;font-size:9.87px;line-height:11.02px;color:#000;transform:scaleX(0.897);transform-origin:0 0;">Andreas Vollenweider</div>
<div class="t" style="left:731.00px;top:151.27px;font-size:9.87px;line-height:11.02px;color:#000;transform:scaleX(0.897);transform-origin:0 0;">Andreas Vollenweider</div>
<div class="t" style="left:845.30px;top:151.27px;font-size:9.87px;line-height:11.02px;color:#000;transform:scaleX(0.949);transform-origin:0 0;">Down to the Moon</div>
<div class="a" style="left:223.8px;top:164.0px;width:843.8px;height:14.5px;background:#d9d9d9;"></div>
<div class="a" style="left:353.5px;top:164.0px;width:1px;height:14.5px;background:#dddddd;"></div>
<div class="a" style="left:382px;top:164.0px;width:1px;height:14.5px;background:#dddddd;"></div>
<div class="a" style="left:495.7px;top:164.0px;width:1px;height:14.5px;background:#dddddd;"></div>
<div class="a" style="left:611.4px;top:164.0px;width:1px;height:14.5px;background:#dddddd;"></div>
<div class="a" style="left:725.5px;top:164.0px;width:1px;height:14.5px;background:#dddddd;"></div>
<div class="a" style="left:840.5px;top:164.0px;width:1px;height:14.5px;background:#dddddd;"></div>
<div class="a" style="left:983px;top:164.0px;width:1px;height:14.5px;background:#dddddd;"></div>
<svg class="a" style="left:228px;top:166.4px;width:10px;height:11px" viewBox="0 0 10 11"><rect x="0.5" y="0.5" width="9" height="10" fill="#f2f8fc" stroke="#98a8b8" stroke-width="0.7"/><path d="M5.6 2.2 v5.2" stroke="#2a7eb8" stroke-width="1.3"/><ellipse cx="4.2" cy="7.7" rx="2.1" ry="1.7" fill="#2a7eb8"/><path d="M5.6 2.2 Q7.9 3.4 7.3 5.6" fill="none" stroke="#2a7eb8" stroke-width="1"/></svg>
<div class="t" style="left:243.30px;top:165.77px;font-size:9.87px;line-height:11.02px;color:#000;transform:scaleX(0.928);transform-origin:0 0;"> 01 - Down to the Moon...</div>
<div class="t" style="left:358.50px;top:165.77px;font-size:9.87px;line-height:11.02px;color:#000;transform:scaleX(0.864);transform-origin:0 0;">D:...</div>
<div class="t" style="left:387.60px;top:165.77px;font-size:9.87px;line-height:11.02px;color:#000;transform:scaleX(0.837);transform-origin:0 0;">FLAC (FLAC)</div>
<div class="t" style="left:502.00px;top:165.77px;font-size:9.87px;line-height:11.02px;color:#000;transform:scaleX(0.949);transform-origin:0 0;">Down to the Moon</div>
<div class="t" style="left:616.60px;top:165.77px;font-size:9.87px;line-height:11.02px;color:#000;transform:scaleX(0.897);transform-origin:0 0;">Andreas Vollenweider</div>
<div class="t" style="left:731.00px;top:165.77px;font-size:9.87px;line-height:11.02px;color:#000;transform:scaleX(0.897);transform-origin:0 0;">Andreas Vollenweider</div>
<div class="t" style="left:845.30px;top:165.77px;font-size:9.87px;line-height:11.02px;color:#000;transform:scaleX(0.949);transform-origin:0 0;">Down to the Moon</div>
<div class="a" style="left:223.8px;top:178.5px;width:843.8px;height:14.5px;background:#d9d9d9;"></div>
<div class="a" style="left:353.5px;top:178.5px;width:1px;height:14.5px;background:#dddddd;"></div>
<div class="a" style="left:382px;top:178.5px;width:1px;height:14.5px;background:#dddddd;"></div>
<div class="a" style="left:495.7px;top:178.5px;width:1px;height:14.5px;background:#dddddd;"></div>
<div class="a" style="left:611.4px;top:178.5px;width:1px;height:14.5px;background:#dddddd;"></div>
<div class="a" style="left:725.5px;top:178.5px;width:1px;height:14.5px;background:#dddddd;"></div>
<div class="a" style="left:840.5px;top:178.5px;width:1px;height:14.5px;background:#dddddd;"></div>
<div class="a" style="left:983px;top:178.5px;width:1px;height:14.5px;background:#dddddd;"></div>
<svg class="a" style="left:228px;top:180.9px;width:10px;height:11px" viewBox="0 0 10 11"><rect x="0.5" y="0.5" width="9" height="10" fill="#f2f8fc" stroke="#98a8b8" stroke-width="0.7"/><path d="M5.6 2.2 v5.2" stroke="#2a7eb8" stroke-width="1.3"/><ellipse cx="4.2" cy="7.7" rx="2.1" ry="1.7" fill="#2a7eb8"/><path d="M5.6 2.2 Q7.9 3.4 7.3 5.6" fill="none" stroke="#2a7eb8" stroke-width="1"/></svg>
<div class="t" style="left:243.30px;top:180.27px;font-size:9.87px;line-height:11.02px;color:#000;transform:scaleX(0.921);transform-origin:0 0;">2 - Moon Dance.flac</div>
<div class="t" style="left:358.50px;top:180.27px;font-size:9.87px;line-height:11.02px;color:#000;transform:scaleX(0.864);transform-origin:0 0;">D:...</div>
<div class="t" style="left:387.60px;top:180.27px;font-size:9.87px;line-height:11.02px;color:#000;transform:scaleX(0.837);transform-origin:0 0;">FLAC (FLAC)</div>
<div class="t" style="left:502.00px;top:180.27px;font-size:9.87px;line-height:11.02px;color:#000;transform:scaleX(0.937);transform-origin:0 0;">Moon Dance</div>
<div class="t" style="left:616.60px;top:180.27px;font-size:9.87px;line-height:11.02px;color:#000;transform:scaleX(0.897);transform-origin:0 0;">Andreas Vollenweider</div>
<div class="t" style="left:731.00px;top:180.27px;font-size:9.87px;line-height:11.02px;color:#000;transform:scaleX(0.897);transform-origin:0 0;">Andreas Vollenweider</div>
<div class="t" style="left:845.30px;top:180.27px;font-size:9.87px;line-height:11.02px;color:#000;transform:scaleX(0.949);transform-origin:0 0;">Down to the Moon</div>
<div class="a" style="left:223.8px;top:193.0px;width:843.8px;height:14.5px;background:#d9d9d9;"></div>
<div class="a" style="left:353.5px;top:193.0px;width:1px;height:14.5px;background:#dddddd;"></div>
<div class="a" style="left:382px;top:193.0px;width:1px;height:14.5px;background:#dddddd;"></div>
<div class="a" style="left:495.7px;top:193.0px;width:1px;height:14.5px;background:#dddddd;"></div>
<div class="a" style="left:611.4px;top:193.0px;width:1px;height:14.5px;background:#dddddd;"></div>
<div class="a" style="left:725.5px;top:193.0px;width:1px;height:14.5px;background:#dddddd;"></div>
<div class="a" style="left:840.5px;top:193.0px;width:1px;height:14.5px;background:#dddddd;"></div>
<div class="a" style="left:983px;top:193.0px;width:1px;height:14.5px;background:#dddddd;"></div>
<svg class="a" style="left:228px;top:195.4px;width:10px;height:11px" viewBox="0 0 10 11"><rect x="0.5" y="0.5" width="9" height="10" fill="#f2f8fc" stroke="#98a8b8" stroke-width="0.7"/><path d="M5.6 2.2 v5.2" stroke="#2a7eb8" stroke-width="1.3"/><ellipse cx="4.2" cy="7.7" rx="2.1" ry="1.7" fill="#2a7eb8"/><path d="M5.6 2.2 Q7.9 3.4 7.3 5.6" fill="none" stroke="#2a7eb8" stroke-width="1"/></svg>
<div class="t" style="left:243.30px;top:194.77px;font-size:9.87px;line-height:11.02px;color:#000;transform:scaleX(0.891);transform-origin:0 0;">3 - Steam Forest.flac</div>
<div class="t" style="left:358.50px;top:194.77px;font-size:9.87px;line-height:11.02px;color:#000;transform:scaleX(0.864);transform-origin:0 0;">D:...</div>
<div class="t" style="left:387.60px;top:194.77px;font-size:9.87px;line-height:11.02px;color:#000;transform:scaleX(0.837);transform-origin:0 0;">FLAC (FLAC)</div>
<div class="t" style="left:502.00px;top:194.77px;font-size:9.87px;line-height:11.02px;color:#000;transform:scaleX(0.878);transform-origin:0 0;">Steam Forest</div>
<div class="t" style="left:616.60px;top:194.77px;font-size:9.87px;line-height:11.02px;color:#000;transform:scaleX(0.897);transform-origin:0 0;">Andreas Vollenweider</div>
<div class="t" style="left:731.00px;top:194.77px;font-size:9.87px;line-height:11.02px;color:#000;transform:scaleX(0.897);transform-origin:0 0;">Andreas Vollenweider</div>
<div class="t" style="left:845.30px;top:194.77px;font-size:9.87px;line-height:11.02px;color:#000;transform:scaleX(0.949);transform-origin:0 0;">Down to the Moon</div>
<div class="a" style="left:223.8px;top:207.5px;width:843.8px;height:14.5px;background:#d9d9d9;"></div>
<div class="a" style="left:353.5px;top:207.5px;width:1px;height:14.5px;background:#dddddd;"></div>
<div class="a" style="left:382px;top:207.5px;width:1px;height:14.5px;background:#dddddd;"></div>
<div class="a" style="left:495.7px;top:207.5px;width:1px;height:14.5px;background:#dddddd;"></div>
<div class="a" style="left:611.4px;top:207.5px;width:1px;height:14.5px;background:#dddddd;"></div>
<div class="a" style="left:725.5px;top:207.5px;width:1px;height:14.5px;background:#dddddd;"></div>
<div class="a" style="left:840.5px;top:207.5px;width:1px;height:14.5px;background:#dddddd;"></div>
<div class="a" style="left:983px;top:207.5px;width:1px;height:14.5px;background:#dddddd;"></div>
<svg class="a" style="left:228px;top:209.9px;width:10px;height:11px" viewBox="0 0 10 11"><rect x="0.5" y="0.5" width="9" height="10" fill="#f2f8fc" stroke="#98a8b8" stroke-width="0.7"/><path d="M5.6 2.2 v5.2" stroke="#2a7eb8" stroke-width="1.3"/><ellipse cx="4.2" cy="7.7" rx="2.1" ry="1.7" fill="#2a7eb8"/><path d="M5.6 2.2 Q7.9 3.4 7.3 5.6" fill="none" stroke="#2a7eb8" stroke-width="1"/></svg>
<div class="t" style="left:243.30px;top:209.27px;font-size:9.87px;line-height:11.02px;color:#000;transform:scaleX(0.926);transform-origin:0 0;">4 - Water Moon.flac</div>
<div class="t" style="left:358.50px;top:209.27px;font-size:9.87px;line-height:11.02px;color:#000;transform:scaleX(0.864);transform-origin:0 0;">D:...</div>
<div class="t" style="left:387.60px;top:209.27px;font-size:9.87px;line-height:11.02px;color:#000;transform:scaleX(0.837);transform-origin:0 0;">FLAC (FLAC)</div>
<div class="t" style="left:502.00px;top:209.27px;font-size:9.87px;line-height:11.02px;color:#000;transform:scaleX(0.945);transform-origin:0 0;">Water Moon</div>
<div class="t" style="left:616.60px;top:209.27px;font-size:9.87px;line-height:11.02px;color:#000;transform:scaleX(0.897);transform-origin:0 0;">Andreas Vollenweider</div>
<div class="t" style="left:731.00px;top:209.27px;font-size:9.87px;line-height:11.02px;color:#000;transform:scaleX(0.897);transform-origin:0 0;">Andreas Vollenweider</div>
<div class="t" style="left:845.30px;top:209.27px;font-size:9.87px;line-height:11.02px;color:#000;transform:scaleX(0.949);transform-origin:0 0;">Down to the Moon</div>
<div class="a" style="left:223.8px;top:222.0px;width:843.8px;height:14.5px;background:#d9d9d9;"></div>
<div class="a" style="left:353.5px;top:222.0px;width:1px;height:14.5px;background:#dddddd;"></div>
<div class="a" style="left:382px;top:222.0px;width:1px;height:14.5px;background:#dddddd;"></div>
<div class="a" style="left:495.7px;top:222.0px;width:1px;height:14.5px;background:#dddddd;"></div>
<div class="a" style="left:611.4px;top:222.0px;width:1px;height:14.5px;background:#dddddd;"></div>
<div class="a" style="left:725.5px;top:222.0px;width:1px;height:14.5px;background:#dddddd;"></div>
<div class="a" style="left:840.5px;top:222.0px;width:1px;height:14.5px;background:#dddddd;"></div>
<div class="a" style="left:983px;top:222.0px;width:1px;height:14.5px;background:#dddddd;"></div>
<svg class="a" style="left:228px;top:224.4px;width:10px;height:11px" viewBox="0 0 10 11"><rect x="0.5" y="0.5" width="9" height="10" fill="#f2f8fc" stroke="#98a8b8" stroke-width="0.7"/><path d="M5.6 2.2 v5.2" stroke="#2a7eb8" stroke-width="1.3"/><ellipse cx="4.2" cy="7.7" rx="2.1" ry="1.7" fill="#2a7eb8"/><path d="M5.6 2.2 Q7.9 3.4 7.3 5.6" fill="none" stroke="#2a7eb8" stroke-width="1"/></svg>
<div class="t" style="left:243.30px;top:223.77px;font-size:9.87px;line-height:11.02px;color:#000;transform:scaleX(0.906);transform-origin:0 0;">5 - Night Fire Dance.flac</div>
<div class="t" style="left:358.50px;top:223.77px;font-size:9.87px;line-height:11.02px;color:#000;transform:scaleX(0.864);transform-origin:0 0;">D:...</div>
<div class="t" style="left:387.60px;top:223.77px;font-size:9.87px;line-height:11.02px;color:#000;transform:scaleX(0.837);transform-origin:0 0;">FLAC (FLAC)</div>
<div class="t" style="left:502.00px;top:223.77px;font-size:9.87px;line-height:11.02px;color:#000;transform:scaleX(0.911);transform-origin:0 0;">Night Fire Dance</div>
<div class="t" style="left:616.60px;top:223.77px;font-size:9.87px;line-height:11.02px;color:#000;transform:scaleX(0.897);transform-origin:0 0;">Andreas Vollenweider</div>
<div class="t" style="left:731.00px;top:223.77px;font-size:9.87px;line-height:11.02px;color:#000;transform:scaleX(0.897);transform-origin:0 0;">Andreas Vollenweider</div>
<div class="t" style="left:845.30px;top:223.77px;font-size:9.87px;line-height:11.02px;color:#000;transform:scaleX(0.949);transform-origin:0 0;">Down to the Moon</div>
<div class="a" style="left:223.8px;top:236.5px;width:843.8px;height:14.5px;background:#d9d9d9;"></div>
<div class="a" style="left:353.5px;top:236.5px;width:1px;height:14.5px;background:#dddddd;"></div>
<div class="a" style="left:382px;top:236.5px;width:1px;height:14.5px;background:#dddddd;"></div>
<div class="a" style="left:495.7px;top:236.5px;width:1px;height:14.5px;background:#dddddd;"></div>
<div class="a" style="left:611.4px;top:236.5px;width:1px;height:14.5px;background:#dddddd;"></div>
<div class="a" style="left:725.5px;top:236.5px;width:1px;height:14.5px;background:#dddddd;"></div>
<div class="a" style="left:840.5px;top:236.5px;width:1px;height:14.5px;background:#dddddd;"></div>
<div class="a" style="left:983px;top:236.5px;width:1px;height:14.5px;background:#dddddd;"></div>
<svg class="a" style="left:228px;top:238.9px;width:10px;height:11px" viewBox="0 0 10 11"><rect x="0.5" y="0.5" width="9" height="10" fill="#f2f8fc" stroke="#98a8b8" stroke-width="0.7"/><path d="M5.6 2.2 v5.2" stroke="#2a7eb8" stroke-width="1.3"/><ellipse cx="4.2" cy="7.7" rx="2.1" ry="1.7" fill="#2a7eb8"/><path d="M5.6 2.2 Q7.9 3.4 7.3 5.6" fill="none" stroke="#2a7eb8" stroke-width="1"/></svg>
<div class="t" style="left:243.30px;top:238.27px;font-size:9.87px;line-height:11.02px;color:#000;transform:scaleX(0.891);transform-origin:0 0;">6 - Quiet Observer.flac</div>
<div class="t" style="left:358.50px;top:238.27px;font-size:9.87px;line-height:11.02px;color:#000;transform:scaleX(0.864);transform-origin:0 0;">D:...</div>
<div class="t" style="left:387.60px;top:238.27px;font-size:9.87px;line-height:11.02px;color:#000;transform:scaleX(0.837);transform-origin:0 0;">FLAC (FLAC)</div>
<div class="t" style="left:502.00px;top:238.27px;font-size:9.87px;line-height:11.02px;color:#000;transform:scaleX(0.885);transform-origin:0 0;">Quiet Observer</div>
<div class="t" style="left:616.60px;top:238.27px;font-size:9.87px;line-height:11.02px;color:#000;transform:scaleX(0.897);transform-origin:0 0;">Andreas Vollenweider</div>
<div class="t" style="left:731.00px;top:238.27px;font-size:9.87px;line-height:11.02px;color:#000;transform:scaleX(0.897);transform-origin:0 0;">Andreas Vollenweider</div>
<div class="t" style="left:845.30px;top:238.27px;font-size:9.87px;line-height:11.02px;color:#000;transform:scaleX(0.949);transform-origin:0 0;">Down to the Moon</div>
<div class="a" style="left:238.3px;top:251.0px;width:1px;height:287.0px;background:#f2f2f2;"></div>
<div class="a" style="left:353.5px;top:251.0px;width:1px;height:287.0px;background:#f2f2f2;"></div>
<div class="a" style="left:382px;top:251.0px;width:1px;height:287.0px;background:#f2f2f2;"></div>
<div class="a" style="left:495.7px;top:251.0px;width:1px;height:287.0px;background:#f2f2f2;"></div>
<div class="a" style="left:611.4px;top:251.0px;width:1px;height:287.0px;background:#f2f2f2;"></div>
<div class="a" style="left:725.5px;top:251.0px;width:1px;height:287.0px;background:#f2f2f2;"></div>
<div class="a" style="left:840.5px;top:251.0px;width:1px;height:287.0px;background:#f2f2f2;"></div>
<div class="a" style="left:983px;top:251.0px;width:1px;height:287.0px;background:#f2f2f2;"></div>
<div class="a" style="left:223.8px;top:538px;width:843.8px;height:12px;background:#f0f0f0;"></div>
<div class="a" style="left:236.5px;top:538.5px;width:663.5px;height:10.5px;background:#cdcdcd;"></div>
<svg class="a" style="left:227.5px;top:541px;width:4.5px;height:5px" viewBox="0 0 4.5 5"><path d="M4 0.3 L1 2.5 L4 4.7" fill="none" stroke="#555" stroke-width="1.5"/></svg>
<svg class="a" style="left:1059px;top:541.2px;width:4.5px;height:5px" viewBox="0 0 4.5 5"><path d="M0.5 0.3 L3.5 2.5 L0.5 4.7" fill="none" stroke="#555" stroke-width="1.5"/></svg>
<div class="a" style="left:0px;top:550px;width:1069px;height:25px;background:#f0f0f0;"></div>
<div class="a" style="left:0px;top:550px;width:1069px;height:1px;background:#c8c8c8;"></div>
<svg class="a" style="left:0px;top:556px;width:4px;height:4px" viewBox="0 0 4 4"><path d="M0 0 L3.5 3.5 M3.5 0 L0 3.5" stroke="#222" stroke-width="1.1"/></svg>
<div class="a" style="left:0px;top:560.5px;width:4px;height:11.5px;background:#e2e2e2;border-right:1px solid #b4b4b4"></div>
<div class="t" style="left:13.50px;top:557.81px;font-size:8.5px;line-height:9.49px;color:#000;transform:scaleX(0.945);transform-origin:0 0;-webkit-text-stroke:0.05px currentColor">Filte<u>r</u>:</div>
<div class="a" style="left:46px;top:554.2px;width:998.7px;height:16.4px;background:#fff;border:1px solid #a9a9a9"></div>
<svg class="a" style="left:1034.5px;top:560px;width:8px;height:5px" viewBox="0 0 8 5"><path d="M0.5 0.8 L4 4 L7.5 0.8" fill="none" stroke="#606060" stroke-width="1"/></svg>
<div class="a" style="left:1049px;top:555.3px;width:14.8px;height:14.1px;background:#e1e1e1;border:1px solid #c4c4c4"></div>
<svg class="a" style="left:1054px;top:559px;width:5px;height:7px" viewBox="0 0 5 7"><path d="M0.5 0 L4.5 3.5 L0.5 7z" fill="#111"/></svg>
<div class="a" style="left:0px;top:575px;width:1069px;height:1px;background:#d4d4d4;"></div>
<div class="a" style="left:0px;top:576px;width:1069px;height:15px;background:#f0f0f0;"></div>
<div class="t" style="left:0.00px;top:580.81px;font-size:8.5px;line-height:9.49px;color:#000;transform:scaleX(0.905);transform-origin:0 0;-webkit-text-stroke:0.05px currentColor">Ready</div>
<div class="a" style="left:953.5px;top:577px;width:1px;height:14px;background:#d8d8d8;"></div>
<div class="t" style="left:958.00px;top:579.49px;font-size:9.4px;line-height:10.50px;color:#000;transform:scaleX(0.910);transform-origin:0 0;">12 (00:36:20 | 200.0MB)</div>
<div class="t" style="left:856.00px;top:579.49px;font-size:9.4px;line-height:10.50px;color:#000;transform:scaleX(0.910);transform-origin:0 0;">12 (00:36:20 | 200.0MB)</div>
<div class="a" style="left:1053px;top:577px;width:1px;height:14px;background:#dcdcdc;"></div>
<div class="a" style="left:1064.5px;top:581.5px;width:1.5px;height:1.5px;background:#b8b8b8;"></div>
<div class="a" style="left:1064.5px;top:584.5px;width:1.5px;height:1.5px;background:#b8b8b8;"></div>
<div class="a" style="left:1061.5px;top:584.5px;width:1.5px;height:1.5px;background:#b8b8b8;"></div>
<div class="a" style="left:1064.5px;top:587.5px;width:1.5px;height:1.5px;background:#b8b8b8;"></div>
<div class="a" style="left:1061.5px;top:587.5px;width:1.5px;height:1.5px;background:#b8b8b8;"></div>
<div class="a" style="left:1058.5px;top:587.5px;width:1.5px;height:1.5px;background:#b8b8b8;"></div>
<div class="a" style="left:912px;top:579px;width:1.2px;height:1.2px;background:#c4c4c4;"></div>
<div class="a" style="left:912px;top:582px;width:1.2px;height:1.2px;background:#c4c4c4;"></div>
<div class="a" style="left:909px;top:582px;width:1.2px;height:1.2px;background:#c4c4c4;"></div>
<div class="a" style="left:912px;top:585px;width:1.2px;height:1.2px;background:#c4c4c4;"></div>
<div class="a" style="left:909px;top:585px;width:1.2px;height:1.2px;background:#c4c4c4;"></div>
<div class="a" style="left:906px;top:585px;width:1.2px;height:1.2px;background:#c4c4c4;"></div>
<div class="a" style="left:0px;top:591px;width:1069px;height:1px;background:#9a9a9a;"></div>
<div class="a" style="left:317.8px;top:212px;width:599.2px;height:375px;box-shadow:1px 3px 14px rgba(0,0,0,0.26);background:#f0f0f0;border:1.2px solid #a0a0a0"></div>
<div class="a" style="left:318.8px;top:213px;width:597.2px;height:23px;background:#fff;"></div>
<div class="t" style="left:325.20px;top:218.07px;font-size:9.87px;line-height:11.02px;color:#000;transform:scaleX(0.851);transform-origin:0 0;">Tags</div>
<svg class="a" style="left:901px;top:219.8px;width:8px;height:8px" viewBox="0 0 8 8"><path d="M0.3 0.3 L7.7 7.7 M7.7 0.3 L0.3 7.7" stroke="#222" stroke-width="0.9"/></svg>
<div class="a" style="left:328.4px;top:249.8px;width:438.1px;height:301.2px;border:1px solid #dcdcdc"></div>
<div class="a" style="left:331px;top:246.8px;width:40px;height:6px;background:#f0f0f0;"></div>
<div class="t" style="left:333.00px;top:243.87px;font-size:9.87px;line-height:11.02px;color:#000;transform:scaleX(0.937);transform-origin:0 0;">Metadata</div>
<div class="a" style="left:771.5px;top:249.8px;width:137.5px;height:301.2px;border:1px solid #dcdcdc"></div>
<div class="a" style="left:775.7px;top:246.8px;width:41px;height:6px;background:#f0f0f0;"></div>
<div class="t" style="left:777.70px;top:243.87px;font-size:9.87px;line-height:11.02px;color:#000;transform:scaleX(0.886);transform-origin:0 0;">Cover 1/1</div>
<div class="a" style="left:334px;top:259.5px;width:402.5px;height:282.5px;background:#fff;border:1px solid #a4a4a4;border-right-color:#8a94a8"></div>
<div class="a" style="left:485px;top:260.5px;width:1px;height:281px;background:#f2f2f2;"></div>
<div class="a" style="left:335px;top:319.25px;width:387.5px;height:14.5px;background:#e5f3ff;"></div>
<div class="a" style="left:336.2px;top:262.2px;width:385.4px;height:12.5px;border:1px dotted #707070"></div>
<div class="t" style="left:340.00px;top:262.77px;font-size:9.87px;line-height:11.02px;color:#000;transform:scaleX(0.888);transform-origin:0 0;">ALBUM</div>
<div class="t" style="left:490.00px;top:262.77px;font-size:9.87px;line-height:11.02px;color:#000;transform:scaleX(0.949);transform-origin:0 0;">Down to the Moon</div>
<div class="t" style="left:340.00px;top:277.27px;font-size:9.87px;line-height:11.02px;color:#000;transform:scaleX(0.821);transform-origin:0 0;">ALBUMARTIST</div>
<div class="t" style="left:490.00px;top:277.27px;font-size:9.87px;line-height:11.02px;color:#000;transform:scaleX(0.897);transform-origin:0 0;">Andreas Vollenweider</div>
<div class="t" style="left:340.00px;top:291.77px;font-size:9.87px;line-height:11.02px;color:#000;transform:scaleX(0.802);transform-origin:0 0;">ALBUMARTISTSORT</div>
<div class="t" style="left:490.00px;top:291.77px;font-size:9.87px;line-height:11.02px;color:#000;transform:scaleX(0.897);transform-origin:0 0;">Andreas Vollenweider</div>
<div class="t" style="left:340.00px;top:306.27px;font-size:9.87px;line-height:11.02px;color:#000;transform:scaleX(0.757);transform-origin:0 0;">ARTIST</div>
<div class="t" style="left:490.00px;top:306.27px;font-size:9.87px;line-height:11.02px;color:#000;transform:scaleX(0.897);transform-origin:0 0;">Andreas Vollenweider</div>
<div class="t" style="left:340.00px;top:320.77px;font-size:9.87px;line-height:11.02px;color:#000;transform:scaleX(0.746);transform-origin:0 0;">ARTISTS</div>
<div class="t" style="left:490.00px;top:320.77px;font-size:9.87px;line-height:11.02px;color:#000;transform:scaleX(0.897);transform-origin:0 0;">Andreas Vollenweider</div>
<div class="t" style="left:340.00px;top:335.27px;font-size:9.87px;line-height:11.02px;color:#000;transform:scaleX(0.755);transform-origin:0 0;">ARTISTSORT</div>
<div class="t" style="left:490.00px;top:335.27px;font-size:9.87px;line-height:11.02px;color:#000;transform:scaleX(0.897);transform-origin:0 0;">Andreas Vollenweider</div>
<div class="t" style="left:340.00px;top:349.77px;font-size:9.87px;line-height:11.02px;color:#000;transform:scaleX(0.815);transform-origin:0 0;">BARCODE</div>
<div class="t" style="left:490.00px;top:349.77px;font-size:9.87px;line-height:11.02px;color:#000;transform:scaleX(0.826);transform-origin:0 0;">07464422552</div>
<div class="t" style="left:340.00px;top:364.27px;font-size:9.87px;line-height:11.02px;color:#000;transform:scaleX(0.834);transform-origin:0 0;">CATALOGNUMBER</div>
<div class="t" style="left:490.00px;top:364.27px;font-size:9.87px;line-height:11.02px;color:#000;transform:scaleX(0.865);transform-origin:0 0;">MK 42255</div>
<div class="t" style="left:340.00px;top:378.77px;font-size:9.87px;line-height:11.02px;color:#000;transform:scaleX(0.834);transform-origin:0 0;">DISCNUMBER</div>
<div class="t" style="left:490.00px;top:378.77px;font-size:9.87px;line-height:11.02px;color:#000;transform:scaleX(0.898);transform-origin:0 0;">1</div>
<div class="t" style="left:340.00px;top:393.27px;font-size:9.87px;line-height:11.02px;color:#000;transform:scaleX(0.781);transform-origin:0 0;">DISCTOTAL</div>
<div class="t" style="left:490.00px;top:393.27px;font-size:9.87px;line-height:11.02px;color:#000;transform:scaleX(0.898);transform-origin:0 0;">1</div>
<div class="t" style="left:340.00px;top:407.77px;font-size:9.87px;line-height:11.02px;color:#000;transform:scaleX(0.786);transform-origin:0 0;">GENRE</div>
<div class="t" style="left:490.00px;top:407.77px;font-size:9.87px;line-height:11.02px;color:#000;transform:scaleX(0.901);transform-origin:0 0;">New Age</div>
<div class="t" style="left:340.00px;top:422.27px;font-size:9.87px;line-height:11.02px;color:#000;transform:scaleX(0.798);transform-origin:0 0;">LABEL</div>
<div class="t" style="left:490.00px;top:422.27px;font-size:9.87px;line-height:11.02px;color:#000;transform:scaleX(0.790);transform-origin:0 0;">CBS</div>
<div class="t" style="left:340.00px;top:436.77px;font-size:9.87px;line-height:11.02px;color:#000;transform:scaleX(0.860);transform-origin:0 0;">MEDIA</div>
<div class="t" style="left:490.00px;top:436.77px;font-size:9.87px;line-height:11.02px;color:#000;transform:scaleX(0.830);transform-origin:0 0;">CD</div>
<div class="t" style="left:340.00px;top:451.27px;font-size:9.87px;line-height:11.02px;color:#000;transform:scaleX(0.837);transform-origin:0 0;">MUSICBRAINZ_ALBUMARTISTID</div>
<div class="t" style="left:490.00px;top:451.27px;font-size:9.87px;line-height:11.02px;color:#000;transform:scaleX(0.881);transform-origin:0 0;">6438bd71-ddc1-4619-a383-20d28ee55b43</div>
<div class="t" style="left:340.00px;top:465.77px;font-size:9.87px;line-height:11.02px;color:#000;transform:scaleX(0.861);transform-origin:0 0;">MUSICBRAINZ_ALBUMID</div>
<div class="t" style="left:490.00px;top:465.77px;font-size:9.87px;line-height:11.02px;color:#000;transform:scaleX(0.885);transform-origin:0 0;">7259e62f-b416-4be3-8882-9cf78fd480e6</div>
<div class="t" style="left:340.00px;top:480.27px;font-size:9.87px;line-height:11.02px;color:#000;transform:scaleX(0.822);transform-origin:0 0;">MUSICBRAINZ_ARTISTID</div>
<div class="t" style="left:490.00px;top:480.27px;font-size:9.87px;line-height:11.02px;color:#000;transform:scaleX(0.881);transform-origin:0 0;">6438bd71-ddc1-4619-a383-20d28ee55b43</div>
<div class="t" style="left:340.00px;top:494.77px;font-size:9.87px;line-height:11.02px;color:#000;transform:scaleX(0.816);transform-origin:0 0;">MUSICBRAINZ_RELEASEGROUPID</div>
<div class="t" style="left:490.00px;top:494.77px;font-size:9.87px;line-height:11.02px;color:#000;transform:scaleX(0.884);transform-origin:0 0;">244f9243-fbc0-322e-8bba-e394c8be8131</div>
<div class="t" style="left:340.00px;top:509.27px;font-size:9.87px;line-height:11.02px;color:#000;transform:scaleX(0.812);transform-origin:0 0;">MUSICBRAINZ_RELEASETRACKID</div>
<div class="t" style="left:490.00px;top:509.27px;font-size:9.87px;line-height:11.02px;color:#000;transform:scaleX(0.887);transform-origin:0 0;">&lt; keep &gt;</div>
<div class="t" style="left:340.00px;top:523.77px;font-size:9.87px;line-height:11.02px;color:#000;transform:scaleX(0.838);transform-origin:0 0;">MUSICBRAINZ_TRACKID</div>
<div class="t" style="left:490.00px;top:523.77px;font-size:9.87px;line-height:11.02px;color:#000;transform:scaleX(0.887);transform-origin:0 0;">&lt; keep &gt;</div>
<div class="a" style="left:722.8px;top:260.5px;width:12.8px;height:280.5px;background:#f2f2f2;"></div>
<div class="a" style="left:723.2px;top:274.3px;width:12px;height:154.7px;background:#cdcdcd;"></div>
<svg class="a" style="left:726px;top:265.8px;width:6px;height:4px" viewBox="0 0 6 4"><path d="M0.5 3.5 L3 0.8 L5.5 3.5" fill="none" stroke="#555" stroke-width="1.4"/></svg>
<svg class="a" style="left:726px;top:531px;width:6px;height:4px" viewBox="0 0 6 4"><path d="M0.5 0.5 L3 3.2 L5.5 0.5" fill="none" stroke="#555" stroke-width="1.4"/></svg>
<div class="a" style="left:742px;top:260px;width:16.5px;height:16.2px;background:#dcdcdc;border:1px solid #c4c4cc"></div>
<svg class="a" style="left:745px;top:262px;width:10.5px;height:12px;" viewBox="0 0 10 11.5"><rect x="1" y="1.5" width="8" height="9.5" fill="#d8e8fc" stroke="#3a60b8" stroke-width="0.9"/><path d="M5.8 0.8 L6.8 2.9 L9.2 3.1 L7.4 4.6 L8 7 L5.8 5.7 L3.6 7 L4.2 4.6 L2.4 3.1 L4.8 2.9z" fill="#f0f010" stroke="#c8c000" stroke-width="0.4"/></svg>
<div class="a" style="left:742px;top:282.4px;width:16.5px;height:16.2px;background:#dcdcdc;border:1px solid #c4c4cc"></div>
<svg class="a" style="left:745px;top:284.4px;width:10.5px;height:12px;opacity:0.4;" viewBox="0 0 10 11.5"><rect x="1" y="1.5" width="8" height="9.5" fill="#dfe8f6" stroke="#5a76b0" stroke-width="0.9"/><path d="M3 8.5 L8.5 2" stroke="#d0b040" stroke-width="1.4"/></svg>
<div class="a" style="left:742px;top:305.5px;width:16.5px;height:16.2px;background:#dcdcdc;border:1px solid #c4c4cc"></div>
<svg class="a" style="left:745px;top:307.5px;width:10.5px;height:12px;opacity:0.4;" viewBox="0 0 10 11.5"><path d="M0.5 1 L9.5 10.5 M9.5 1 L0.5 10.5" stroke="#d42020" stroke-width="1.6"/></svg>
<div class="a" style="left:884.3px;top:260.2px;width:16.5px;height:16.2px;background:#dcdcdc;border:1px solid #c4c4cc"></div>
<svg class="a" style="left:887.3px;top:262.2px;width:10.5px;height:12px;" viewBox="0 0 10 11.5"><rect x="1" y="1.5" width="8" height="9.5" fill="#d8e8fc" stroke="#3a60b8" stroke-width="0.9"/><path d="M5.8 0.8 L6.8 2.9 L9.2 3.1 L7.4 4.6 L8 7 L5.8 5.7 L3.6 7 L4.2 4.6 L2.4 3.1 L4.8 2.9z" fill="#f0f010" stroke="#c8c000" stroke-width="0.4"/></svg>
<div class="a" style="left:884.3px;top:282.8px;width:16.5px;height:16.2px;background:#dcdcdc;border:1px solid #c4c4cc"></div>
<svg class="a" style="left:887.3px;top:284.8px;width:10.5px;height:12px;" viewBox="0 0 10 11.5"><path d="M0.5 1 h8 l1 1 v9 h-9z" fill="#3030a0"/><rect x="2" y="1" width="5.5" height="3.5" fill="#e8e8f8"/><rect x="1.8" y="6.2" width="6.4" height="4.8" fill="#fff"/><rect x="2.8" y="7.5" width="4" height="0.8" fill="#3030a0"/></svg>
<div class="a" style="left:884.3px;top:305.2px;width:16.5px;height:16.2px;background:#dcdcdc;border:1px solid #c4c4cc"></div>
<svg class="a" style="left:887.3px;top:307.2px;width:10.5px;height:12px;" viewBox="0 0 10 11.5"><path d="M0.5 1 L9.5 10.5 M9.5 1 L0.5 10.5" stroke="#d42020" stroke-width="1.6"/></svg>
<svg class="a" style="left:778.2px;top:259.8px;width:100px;height:100px" viewBox="0 0 100 100" preserveAspectRatio="none">
<defs>
<linearGradient id="lgb" x1="0" y1="0" x2="0" y2="1">
<stop offset="0" stop-color="#060b0b"/><stop offset="0.22" stop-color="#0a1614"/><stop offset="0.36" stop-color="#102828"/><stop offset="0.5" stop-color="#1a4a64"/><stop offset="0.65" stop-color="#1e6080"/><stop offset="0.88" stop-color="#226a88"/><stop offset="1" stop-color="#3a6a74"/>
</linearGradient>
<radialGradient id="rgb" cx="0.47" cy="0.74" r="0.42">
<stop offset="0" stop-color="#f0fff8" stop-opacity="0.95"/><stop offset="0.09" stop-color="#b0e4f4" stop-opacity="0.75"/><stop offset="0.35" stop-color="#58b0d0" stop-opacity="0.5"/><stop offset="0.7" stop-color="#2a7898" stop-opacity="0.18"/><stop offset="1" stop-color="#1a5a70" stop-opacity="0"/>
</radialGradient>
<filter id="blb"><feGaussianBlur stdDeviation="2.5"/></filter>
</defs>
<rect width="100" height="100" fill="url(#lgb)"/>
<g filter="url(#blb)"><rect x="2" y="18" width="5" height="30" fill="#040808" opacity="0.4"/><rect x="9" y="18" width="3" height="24" fill="#040808" opacity="0.35"/><rect x="15" y="18" width="6" height="34" fill="#040808" opacity="0.4"/><rect x="24" y="18" width="4" height="22" fill="#040808" opacity="0.35"/><rect x="31" y="18" width="5" height="28" fill="#040808" opacity="0.4"/><rect x="40" y="18" width="3" height="20" fill="#040808" opacity="0.3"/><rect x="47" y="18" width="6" height="26" fill="#040808" opacity="0.35"/><rect x="57" y="18" width="4" height="30" fill="#040808" opacity="0.4"/><rect x="64" y="18" width="5" height="24" fill="#040808" opacity="0.35"/><rect x="72" y="18" width="3" height="32" fill="#040808" opacity="0.4"/><rect x="78" y="18" width="6" height="28" fill="#040808" opacity="0.35"/><rect x="88" y="18" width="4" height="34" fill="#040808" opacity="0.4"/><rect x="94" y="18" width="5" height="26" fill="#040808" opacity="0.35"/></g>
<rect width="100" height="100" fill="url(#rgb)"/>
<text x="50" y="11.5" text-anchor="middle" font-family="Liberation Sans" font-size="9.5" fill="#d0dcdc" fill-opacity="0.6" textLength="90" lengthAdjust="spacingAndGlyphs">ANDREAS VOLLENWEIDER</text>
<text x="49" y="17.5" text-anchor="middle" font-family="Liberation Sans" font-size="3" fill="#a8bcbc" textLength="30" lengthAdjust="spacingAndGlyphs">DOWN TO THE MOON</text>
<rect x="82" y="89" width="12" height="8" fill="#d8e4e8" opacity="0.85"/>
<rect x="84" y="90" width="8" height="4.5" fill="#90a8b0"/>
</svg>
<div class="t" style="left:728.00px;width:200px;text-align:center;top:383.54px;font-size:8.8px;line-height:9.83px;color:#000;transform:scaleX(0.953);transform-origin:50% 0;">image/jpeg</div>
<div class="t" style="left:728.00px;width:200px;text-align:center;top:393.34px;font-size:8.8px;line-height:9.83px;color:#000;transform:scaleX(0.848);transform-origin:50% 0;">500x500</div>
<div class="t" style="left:728.00px;width:200px;text-align:center;top:403.14px;font-size:8.8px;line-height:9.83px;color:#000;transform:scaleX(0.938);transform-origin:50% 0;">67 KB</div>
<div class="t" style="left:728.00px;width:200px;text-align:center;top:412.94px;font-size:8.8px;line-height:9.83px;color:#000;transform:scaleX(0.951);transform-origin:50% 0;">Front Cover</div>
<div class="a" style="left:721.4px;top:561.2px;width:55.200000000000045px;height:16.2px;background:#e1e1e1;border:1.6px solid #0a78d8"></div>
<div class="t" style="left:649.00px;width:200px;text-align:center;top:563.67px;font-size:9.87px;line-height:11.02px;color:#000;transform:scaleX(0.844);transform-origin:50% 0;">OK</div>
<div class="a" style="left:783.9px;top:561.2px;width:27.600000000000023px;height:16.2px;background:#cccccc;border:1px solid #c4c4c4"></div>
<div class="t" style="left:697.70px;width:200px;text-align:center;top:563.67px;font-size:9.87px;line-height:11.02px;color:#a8a8a8;transform:scaleX(0.883);transform-origin:50% 0;">&lt;&lt;</div>
<div class="a" style="left:818.4px;top:561.2px;width:27.300000000000068px;height:16.2px;background:#cccccc;border:1px solid #c4c4c4"></div>
<div class="t" style="left:732.05px;width:200px;text-align:center;top:563.67px;font-size:9.87px;line-height:11.02px;color:#a8a8a8;transform:scaleX(0.883);transform-origin:50% 0;">&gt;&gt;</div>
<div class="a" style="left:851.9px;top:561.2px;width:55.89999999999998px;height:16.2px;background:#e1e1e1;border:1px solid #b0b0b0"></div>
<div class="t" style="left:779.85px;width:200px;text-align:center;top:563.67px;font-size:9.87px;line-height:11.02px;color:#000;transform:scaleX(0.891);transform-origin:50% 0;">Cancel</div>
</body></html>
